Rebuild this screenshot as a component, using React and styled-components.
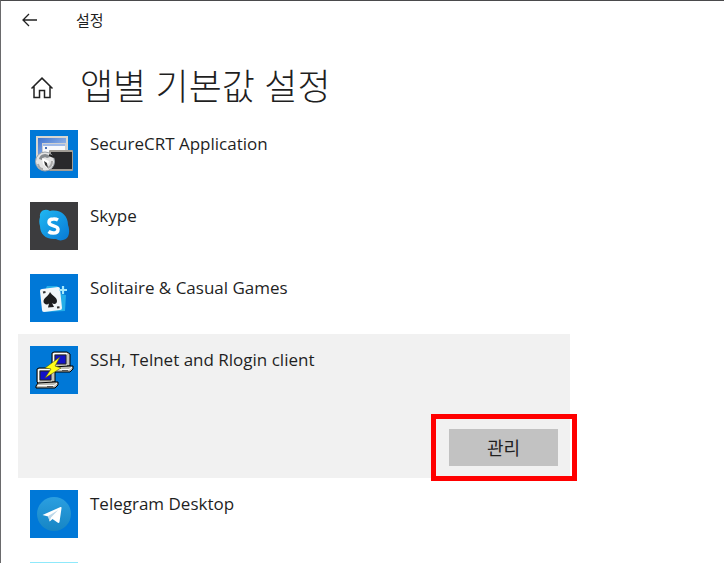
import React from 'react'
import styled, { createGlobalStyle } from 'styled-components'

const apps = [
    { name: 'SecureCRT Application', icon: <SecureCrtIcon /> },
    { name: 'Skype', icon: <SkypeIcon />, tile: '#3c3c3e' },
    { name: 'Solitaire & Casual Games', icon: <SolitaireIcon /> },
    { name: 'SSH, Telnet and Rlogin client', icon: <PuttyIcon /> },
    { name: 'Telegram Desktop', icon: <TelegramIcon /> },
    { name: '', icon: null, tile: '#8fe9fb' },
]

function App() {
    const [selected, setSelected] = React.useState(3)

    return (
        <>
            <GlobalStyle />
            <WindowStyled>
                <TitleBar>
                    <IconButton aria-label="뒤로">
                        <svg width="16" height="14" viewBox="0 0 16 14">
                            <path d="M15 7H1.2M7 1 1 7l6 6" fill="none" stroke="#222" strokeWidth="1.3" />
                        </svg>
                    </IconButton>
                    <span>설정</span>
                </TitleBar>
                <Header>
                    <IconButton aria-label="홈">
                        <svg width="24" height="24" viewBox="0 0 24 24">
                            <path
                                d="M1.500 13.500 12 3.100 22.500 13.500M4 11.500v11h5.500v-7h5v7H20v-11"
                                fill="none"
                                stroke="#222"
                                strokeWidth="1.500"
                            />
                        </svg>
                    </IconButton>
                    <h1>앱별 기본값 설정</h1>
                </Header>
                <AppList>
                    {apps.map((app, index) => {
                        return <AppRow key={index} $selected={selected === index} onClick={() => setSelected(index)}>
                            <AppInfo>
                                <Tile $color={app.tile}>{app.icon}</Tile>
                                <AppName>{app.name}</AppName>
                            </AppInfo>
                            {selected === index &&
                                <Actions>
                                    <ManageButton>관리</ManageButton>
                                </Actions>
                            }
                        </AppRow>
                    })}
                </AppList>
            </WindowStyled>
        </>
    )
}

function SecureCrtIcon() {
    return (
        <svg viewBox="0 0 48 48">
            <defs>
                <linearGradient id="crtScreen" x1="0" y1="0" x2="1" y2="1">
                    <stop offset="0" stopColor="#3f74cf" />
                    <stop offset="1" stopColor="#b9d2f5" />
                </linearGradient>
            </defs>
            <rect x="6" y="6" width="32" height="26" fill="#d9d6cf" />
            <rect x="8" y="8" width="28" height="22" fill="url(#crtScreen)" />
            <path d="M12 31V13h25v9H22v9z" fill="#cfd0d2" />
            <path d="M13 28V14h22v8H20v6z" fill="#f7f9fc" />
            <path d="M13 14h22v2H13z" fill="#9db9e8" />
            <path d="M15 18h2" stroke="#4a6fae" strokeWidth="2" />
            <rect x="19" y="20" width="24" height="21" rx="1" fill="#a19d96" />
            <rect x="21" y="22" width="21" height="17" fill="#29292b" />
            <circle cx="15" cy="31.500" r="9.500" fill="#e4e4e4" stroke="#9aa1a8" />
            <path d="M9 29a6 6 0 0 1 11-2l-3 1a3 3 0 0 0-5 2z" fill="#85898d" />
            <path d="M8 34q1 5 5 5M22 31q0 5-4 7" fill="none" stroke="#aaa" strokeWidth="2" />
            <path d="M12 28l7 3-2 7-4-4z" fill="#fff" />
            <path d="M14 31l3 2 1 5-3-3z" fill="#333" />
            <path d="M19 25l5 2" stroke="#222" strokeWidth="2" />
        </svg>
    )
}

function SkypeIcon() {
    return (
        <svg viewBox="0 0 48 48">
            <defs>
                <linearGradient id="skypeBlue" x1="0" y1="0" x2="1" y2="1">
                    <stop offset="0" stopColor="#20b8f2" />
                    <stop offset="1" stopColor="#0879d5" />
                </linearGradient>
            </defs>
            <path
                d="M10 15c-1-6 5-9 10-6 10-2 18 4 18 14 2 5 2 14-5 15-3 1-5 0-7-1-10 1-16-5-16-13-1-3-1-6 0-9z"
                fill="url(#skypeBlue)"
            />
            <path
                d="M28 18Q26 16.800 23.500 17c-3 0-4.500 1.500-4.500 3.300 0 4.500 9 2.700 9 6.900 0 2.500-2 3.800-4.700 3.800q-2.800 0-4.800-1.500"
                fill="none"
                stroke="#fff"
                strokeWidth="3.500"
            />
        </svg>
    )
}

function SolitaireIcon() {
    return (
        <svg viewBox="0 0 48 48">
            <path d="M16 14l1-2 10 0 3 3 1 5 5 1-1 16-20 1z" fill="#25aee8" />
            <path d="M12 15l16-2q2 0 2 2l2 19q0 2-2 2l-16 2q-2 0-2-2l-2-19q0-2 2-2z" fill="#f2f6f9" />
            <path
                d="M20 18c2 4 7 5 7 9 0 3-3 4-5 2l2 4-6 .500 1-4c-2 2-5.500.500-5.500-2 0-4 5-5 6.500-9.500z"
                fill="#1d1d1f"
            />
            <path d="M13 18.500l2.500-.500M27 33.500l2.500-.300" stroke="#333" strokeWidth="2" />
            <path d="M33 12v8M29 16h8" stroke="#a5e9fb" strokeWidth="2.200" />
        </svg>
    )
}

function PuttyComputer() {
    return (
        <>
            <path d="M22 7l2-1h13l3 2v12h-3v2H24l-2-2z" fill="#c4c4bc" stroke="#000" />
            <path d="M23.500 20V7.500H37" fill="none" stroke="#fff" />
            <path d="M25 9h11v9H25z" fill="#1212c8" stroke="#222" />
            <path d="M23 21l-2 3v2h19l3-3v-3h-4z" fill="#bcbcb4" stroke="#000" />
            <path d="M22.500 23.500H39l3-2.500" fill="none" stroke="#fff" />
            <path d="M32 24.500h6" stroke="#555" />
        </>
    )
}

function PuttyIcon() {
    return (
        <svg viewBox="0 0 48 48">
            <PuttyComputer />
            <g transform="translate(-15 16)">
                <PuttyComputer />
            </g>
            <path d="M30 11L15 22l6 1-6 9 16-10-6-2z" fill="#ffff18" stroke="#55550a" strokeWidth=".6" />
        </svg>
    )
}

function TelegramIcon() {
    return (
        <svg viewBox="0 0 48 48">
            <defs>
                <linearGradient id="telegramBlue" x1="0" y1="0" x2="0" y2="1">
                    <stop offset="0" stopColor="#2b9fe0" />
                    <stop offset="1" stopColor="#1685c4" />
                </linearGradient>
            </defs>
            <circle cx="24" cy="24" r="17" fill="url(#telegramBlue)" />
            <path d="M12.500 25L30.500 17q1.300-.300 1 1.200L29.500 32q-.500 1.700-2 .600l-5-3.600-2.800 2.500-1.500-5z" fill="#fff" />
            <path d="M18.200 26l10-6-7.200 7.500-1.500 4z" fill="#bcd8ea" />
        </svg>
    )
}

const GlobalStyle = createGlobalStyle`
  * {
    box-sizing: border-box;
  }

  body {
    margin: 0;
    overflow: hidden;
    color: #1f1f1f;
    background: #fff;
    font-family: "Open Sans", "Noto Sans CJK KR", sans-serif;
  }

  button {
    border: none;
    font-family: inherit;
    cursor: pointer;
  }
`;

const WindowStyled = styled.main`
  height: 100vh;
  overflow: hidden;
  border-top: 1px solid #4a4a4c;
  border-left: 1px solid #6a6a6c;
`;

const TitleBar = styled.div`
  display: flex;
  align-items: center;
  gap: 38px;
  height: 38px;
  padding-left: 21px;
  font-size: 15px;
  line-height: 20px;
`;

const IconButton = styled.button`
  display: flex;
  padding: 0;
  background: transparent;
`;

const Header = styled.header`
  display: flex;
  align-items: center;
  gap: 26px;
  height: 79px;
  padding: 16px 0 0 29px;

  h1 {
    margin: 0;
    font-size: 36px;
    font-weight: 300;
    line-height: 48px;
  }
`;

const AppList = styled.ul`
  max-width: 569px;
  margin: 0;
  padding: 0 0 0 17px;
  list-style: none;
`;

const AppRow = styled.li`
  padding: 12px;
  background: ${props => props.$selected ? '#f1f1f1' : 'transparent'};
`;

const AppInfo = styled.div`
  display: flex;
  gap: 12px;
`;

const Tile = styled.div`
  width: 48px;
  height: 48px;
  background: ${props => props.$color || '#0078d7'};

  svg {
    display: block;
  }
`;

const AppName = styled.span`
  font-size: 17px;
  line-height: 28px;
`;

const Actions = styled.div`
  display: flex;
  justify-content: flex-end;
  padding-top: 35px;
`;

const ManageButton = styled.button`
  position: relative;
  width: 109px;
  height: 37px;
  color: #1f1f1f;
  font-size: 18px;
  line-height: 24px;
  background: #c2c2c2;

  &::after {
    content: '';
    position: absolute;
    inset: -15px -19px -15px -18px;
    border: 5px solid #ff0000;
  }
`;

export default App
